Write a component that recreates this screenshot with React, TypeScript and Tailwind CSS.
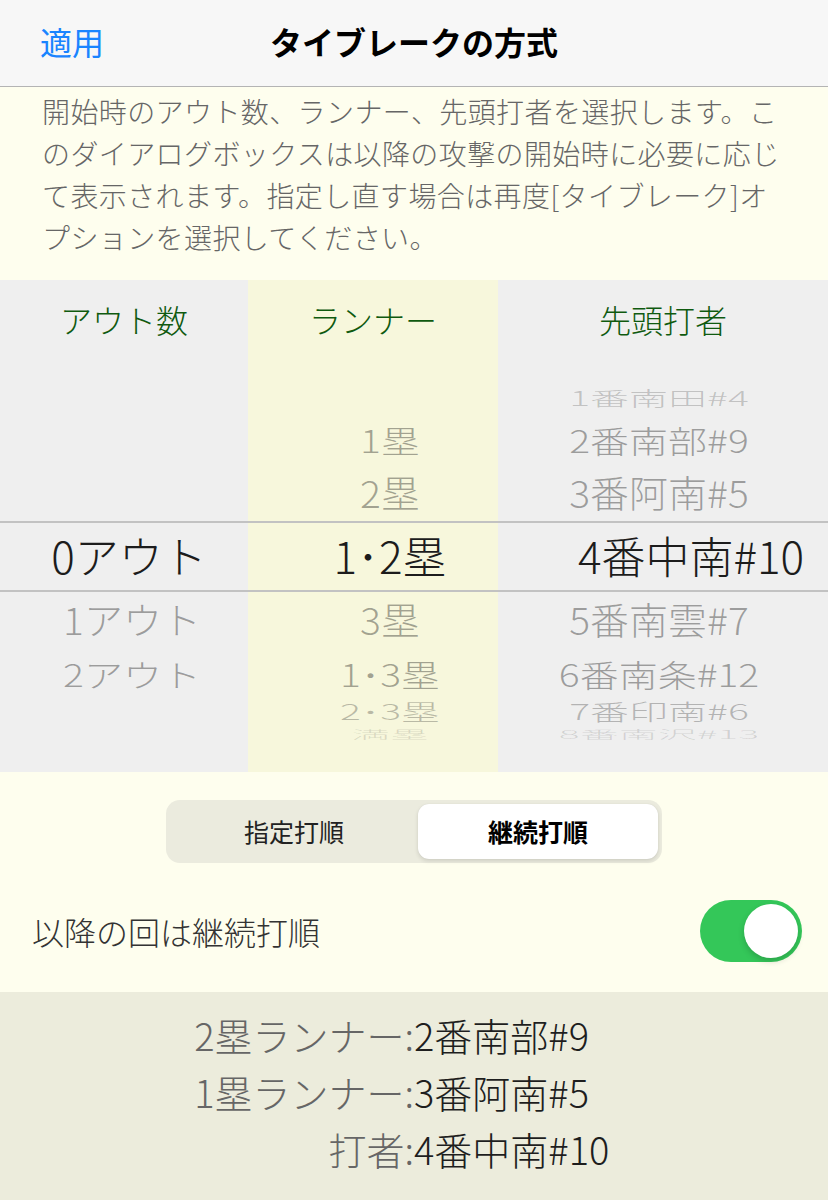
import React from "react";

const FONT = { fontFamily: '"Noto Sans CJK JP", "Noto Sans", sans-serif' };

type Row = { h: number; text?: string; cls: string };

function Wheel({ rows, shift }: { rows: Row[]; shift: string }) {
  return (
    <div className={`flex flex-col ${shift}`}>
      {rows.map((r, i) => (
        <div
          key={i}
          className="flex items-center justify-center overflow-visible whitespace-nowrap"
          style={{ height: r.h }}
        >
          {r.text ? <span className={`leading-none ${r.cls}`}>{r.text}</span> : null}
        </div>
      ))}
    </div>
  );
}

const H = [38, 46, 60, 66, 62, 46, 29, 18];
const S = {
  m3: "text-[39px] font-light text-black/20 scale-y-[0.5]",
  m2: "text-[39px] font-light text-black/35 scale-y-[0.8]",
  m1: "text-[39px] font-light text-black/35 scale-y-[0.95]",
  sel: "text-[44px] font-light text-[#1c1c1c]",
  p1: "text-[39px] font-light text-black/35 scale-y-[0.95]",
  p2: "text-[39px] font-light text-black/35 scale-y-[0.8]",
  p3: "text-[39px] font-light text-black/25 scale-y-[0.55]",
  p4: "text-[39px] font-light text-black/12 scale-y-[0.3]",
};

function mk(texts: (string | undefined)[]): Row[] {
  const keys = ["m3", "m2", "m1", "sel", "p1", "p2", "p3", "p4"] as const;
  return keys.map((k, i) => ({ h: H[i], text: texts[i], cls: S[k] }));
}

export default function App() {
  const col1 = mk([undefined, undefined, undefined, "0アウト", "1アウト", "2アウト", undefined, undefined]);
  col1[3].cls = S.sel + " -translate-x-[3px]";
  const col2 = mk([undefined, "1塁", "2塁", "1･2塁", "3塁", "1･3塁", "2･3塁", "満塁"]);
  const col3 = mk([
    "1番南田#4",
    "2番南部#9",
    "3番阿南#5",
    "4番中南#10",
    "5番南雲#7",
    "6番南条#12",
    "7番印南#6",
    "8番南沢#13",
  ]);
  col3[3].cls = S.sel + " translate-x-[32px]";

  return (
    <div className="w-[828px] h-[1200px] overflow-hidden bg-[#fefeee]" style={FONT}>
      {/* Header */}
      <div className="h-[87px] bg-[#f7f7f7] border-b-[1.5px] border-[#b4b4b4] flex items-center relative">
        <div className="pl-[40px] text-[32px] text-[#1a84ff] leading-none w-[200px] -mt-[4px]">適用</div>
        <div className="flex-1 text-center text-[32px] font-bold text-black leading-none pr-[200px] -mt-[4px]">
          タイブレークの方式
        </div>
      </div>

      {/* Description */}
      <div className="h-[193px] bg-[#fefeee] pl-[42px] pt-[3px] text-[28px] font-light leading-[42px] text-[#666] whitespace-nowrap tracking-[0.4px]">
        開始時のアウト数、ランナー、先頭打者を選択します。こ
        <br />
        のダイアログボックスは以降の攻撃の開始時に必要に応じ
        <br />
        て表示されます。指定し直す場合は再度[タイブレーク]オ
        <br />
        プションを選択してください。
      </div>

      {/* Picker */}
      <div className="relative h-[492px] grid grid-cols-[248px_250px_330px]">
        <div className="bg-[#efefef] flex flex-col">
          <div className="h-[78px] flex items-center justify-center text-[32px] font-light text-[#0f5a0f] leading-none">
            アウト数
          </div>
          <div className="h-[20px]" />
          <Wheel rows={col1} shift="pl-[16px]" />
        </div>
        <div className="bg-[#f7f7dc] flex flex-col">
          <div className="h-[78px] flex items-center justify-center text-[32px] font-light text-[#0f5a0f] leading-none">
            ランナー
          </div>
          <div className="h-[20px]" />
          <Wheel rows={col2} shift="pl-[34px]" />
        </div>
        <div className="bg-[#efefef] flex flex-col">
          <div className="h-[78px] flex items-center justify-center text-[32px] font-light text-[#0f5a0f] leading-none">
            先頭打者
          </div>
          <div className="h-[20px]" />
          <Wheel rows={col3} shift="pr-[8px]" />
        </div>
        {/* selection lines overlay */}
        <div className="absolute left-0 right-0 top-[241px] h-[1.5px] bg-[#c2c2c2]" />
        <div className="absolute left-0 right-0 top-[310px] h-[1.5px] bg-[#c2c2c2]" />
      </div>

      {/* Options */}
      <div className="h-[220px] bg-[#fefeee] flex flex-col">
        <div className="pt-[28px] flex justify-center">
          <div className="w-[496px] h-[63px] rounded-[14px] bg-[#ebebde] p-[4px] flex">
            <div className="flex-1 flex items-center justify-center text-[25px] text-[#222] leading-none">
              指定打順
            </div>
            <div className="w-[240px] rounded-[11px] bg-white shadow-[0_2px_4px_rgba(0,0,0,0.12),0_0_1px_rgba(0,0,0,0.1)] flex items-center justify-center text-[25px] font-bold text-black leading-none">
              継続打順
            </div>
          </div>
        </div>
        <div className="mt-[37px] flex items-center justify-between pl-[32px] pr-[26px]">
          <div className="text-[32px] font-light text-[#333] leading-none">以降の回は継続打順</div>
          <div className="w-[102px] h-[62px] rounded-full bg-[#34c759] flex items-center justify-end pr-[4px]">
            <div className="w-[54px] h-[54px] rounded-full bg-white shadow-[0_3px_6px_rgba(0,0,0,0.18)]" />
          </div>
        </div>
      </div>

      {/* Summary */}
      <div className="h-[208px] bg-[#ececdc] pt-[14px] flex flex-col">
        {[
          ["2塁ランナー:", "2番南部#9"],
          ["1塁ランナー:", "3番阿南#5"],
          ["打者:", "4番中南#10"],
        ].map(([l, v], i) => (
          <div key={i} className="h-[57px] flex items-center text-[38px] font-light leading-none">
            <div className="w-[414px] text-right text-[#666]">{l}</div>
            <div className="text-[#1e1e1e]">{v}</div>
          </div>
        ))}
      </div>
    </div>
  );
}
